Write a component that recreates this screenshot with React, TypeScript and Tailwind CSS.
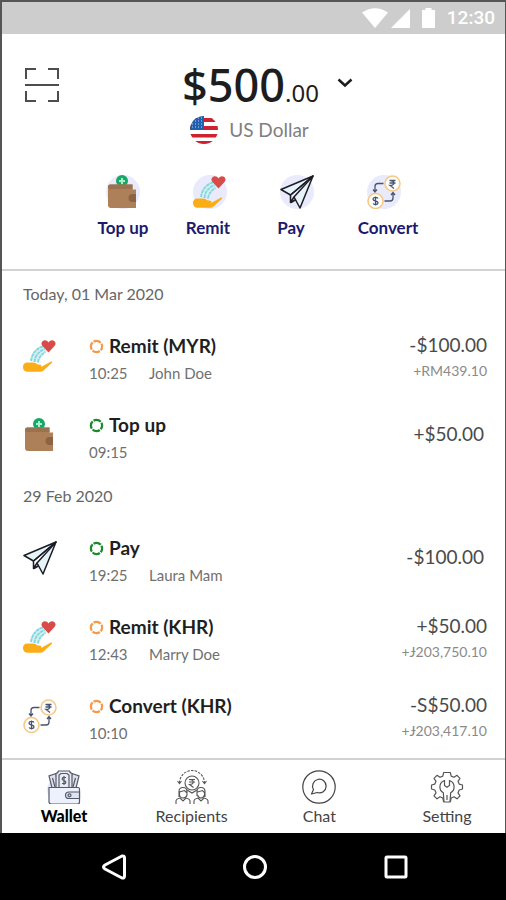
import type React from "react";

type IconProps = { className?: string };

const ScanIcon = ({ className }: IconProps) => (
  <svg className={className} viewBox="0 0 36 36" fill="none" stroke="#4d4d4d" strokeWidth="2">
    <path d="M2 12V2h10M24 2h10v10M34 24v10H24M12 34H2V24M1 18h34" />
  </svg>
);

const FlagIcon = ({ className }: IconProps) => (
  <svg className={className} viewBox="0 0 28 28">
    <rect width="28" height="28" fill="#fff" />
    <path d="M0 2h28v4H0zM0 10h28v4H0zM0 18h28v3.500H0zM0 25h28v3H0z" fill="#cf2230" />
    <rect width="14" height="14" fill="#1f5fae" />
    <path
      d="M8 2h1M11 2h1M5 5h1M8 5h1M11 5h1M2 8h1M5 8h1M8 8h1M11 8h1M2 11h1M5 11h1M8 11h1M11 11h1"
      stroke="#b9d3ef"
      strokeWidth="1"
    />
  </svg>
);

const WalletBrownIcon = ({ className }: IconProps) => (
  <svg className={className} viewBox="0 0 34 34">
    <circle cx="16" cy="6" r="6" fill="#15a866" />
    <path d="M16 3v6M13 6h6" stroke="#a9efcb" strokeWidth="2" />
    <path d="M4 9.500h22.500v5H30v18.500H5a3 3 0 0 1-3-3v-18.500a2 2 0 0 1 2-2z" fill="#ad8059" />
    <path d="M2 12q0-2.500 2.500-2.500h22V14H4q-2 0-2-2z" fill="#9b7250" />
    <path d="M26.500 19H30v8h-3.500a4 4 0 0 1 0-8z" fill="#8d6443" />
  </svg>
);

const RemitIcon = ({ className }: IconProps) => (
  <svg className={className} viewBox="0 0 34 34">
    <path d="M7 22C8 14 13 8 20 6l4 6.500c-4 2-7 6-8 11z" fill="#d3f1f4" />
    <path
      d="M8 22C9 15 13 9.500 20 7.500M11.500 23c.5-6 4-10.500 10-13M15 23.500c.5-4.500 3-8 7.500-10.500"
      fill="none"
      stroke="#84d6dc"
      strokeWidth="1.800"
      strokeDasharray="3.500 .6"
    />
    <path
      d="M25.500 13.500 19.500 7a3.500 3.500 0 0 1 0-4.700c1.800-1.800 4.500-1.200 6 1.200 1.500-2.400 4.200-3 6-1.200a3.500 3.500 0 0 1 0 4.700z"
      fill="#d84b49"
    />
    <path
      d="M0 28q0-4.500 4.500-4.500h6q2.500 0 3.500 1.700l3.500.6q1.800.8.5 2.200l10-5.500q1.500-.3 1 1.200L20 32q-1 .8-2.500.8H5Q0 32.500 0 28z"
      fill="#fbad18"
    />
  </svg>
);

const PlaneIcon = ({ className }: IconProps) => (
  <svg
    className={className}
    viewBox="0 0 34 34"
    fill="none"
    stroke="#1c1c26"
    strokeWidth="1.500"
    strokeLinejoin="round"
  >
    <path d="M33 1 1 14.500l9.500 5.500z" fill="#e6f4fa" />
    <path d="M33 1 14 22l6 11z" fill="#e6f4fa" />
    <path d="M10.500 20 33 1M10.500 20v7.500L14 22M11 27.500l5-3" />
  </svg>
);

const ConvertIcon = ({ className }: IconProps) => (
  <svg className={className} viewBox="0 0 34 34" fill="none">
    <circle cx="25.500" cy="8.500" r="7.500" fill="#fff" stroke="#f8c983" strokeWidth="1.600" />
    <circle cx="8.500" cy="26" r="7.500" fill="#fff" stroke="#f8c983" strokeWidth="1.600" />
    <g stroke="#4a5470" strokeWidth="1.300">
      <path d="M22.500 5.500h6M22.500 8h6M23 5.500c5 0 5 5 0 5l4 3" />
      <path d="M11 23.500c-1-1.500-5-1.500-5 .8 0 2.200 5 1.200 5 3.400 0 2.300-4 2.300-5 .8M8.500 21.500v9" />
      <path d="M16.500 8.500H11a3 3 0 0 0-3 3v5.500M6 14.500l2 2.500 2-2.500" />
      <path d="M17.500 26H23a3 3 0 0 0 3-3v-5.500M24 20l2-2.500 2 2.500" />
    </g>
  </svg>
);

const StatusRing = ({ color }: { color: string }) => (
  <svg className="w-[15px] h-[15px] mr-[5px] shrink-0" viewBox="0 0 16 16" fill="none">
    <circle
      cx="8"
      cy="8"
      r="6"
      stroke={color}
      strokeWidth="2.400"
      strokeDasharray="8.300 1.125"
      strokeDashoffset="4"
    />
  </svg>
);

const MoneyWalletIcon = ({ className }: IconProps) => (
  <svg className={className} viewBox="0 0 34 34" fill="none" stroke="#555a6b" strokeWidth="1.200">
    <circle cx="12" cy="20" r="12" fill="#e6e9fa" stroke="none" />
    <path d="M5 18 2 6l7-2.500L11 18M29 18l3-12-7-2.500L23 18" fill="#dfe2ec" />
    <path d="M9 18V3.500q2-.5 2.500-2.500h11q.5 2 2.500 2.500V18z" fill="#e9ebf3" />
    <path d="M12 17V5l2-1.500h6L22 5v12M5.500 8l2.500 9M28.500 8 26 17" />
    <path d="M19 7.500h-3q-1.500 1.500 0 2.500l2 1q1.500 1.500 0 2.500h-3M17 6v9" />
    <path d="M2 17.500h29a1.500 1.500 0 0 1 1.500 1.500v13a2 2 0 0 1-2 2h-26a2.500 2.500 0 0 1-2.500-2.500z" fill="#edf0fd" />
    <path d="M32.500 22H22q-3.500 0-3.500 3.300t3.500 3.200h10.500z" fill="#dfe3f5" />
    <circle cx="22.500" cy="25.300" r="1.500" />
  </svg>
);

const RecipientsIcon = ({ className }: IconProps) => (
  <svg className={className} viewBox="0 0 34 34" fill="none" stroke="#555" strokeWidth="1.100">
    <path d="M4.500 13a12.500 12.500 0 0 1 25 0" strokeDasharray="2.500 1.200" />
    <path d="m2.500 11 2 2.500 2-2.500M27.500 11l2 2.500 2-2.500" />
    <circle cx="17" cy="13" r="7" />
    <path d="M14 9.500h6M14 12h6M14.500 9.500c5 0 5 5 0 5l4 3" />
    <path d="M4 27v-5.500q0-4 4-4t4 4V25q-1 3-4 3t-3.500-3v-3l5-1.500 2 2" />
    <path d="M22 26v-4.500q0-4 4-4t4 4V27M22.500 22l5-1.500 2 2V25q-1 3-3.500 3t-3.500-3" />
    <path d="M1 34v-3q0-2 4-3l3 3 3-3q4 1 4 3v3M19 34v-3q0-2 4-3l3 3 3-3q4 1 4 3v3M12 20l5 3 5-3" />
  </svg>
);

const ChatIcon = ({ className }: IconProps) => (
  <svg className={className} viewBox="0 0 34 34" fill="none" stroke="#444" strokeWidth="1.200">
    <circle cx="17" cy="17" r="16.200" />
    <path d="M11.500 19.500a6.800 6.800 0 1 1 3.700 3L9.500 24z" strokeLinejoin="round" />
  </svg>
);

const SettingIcon = ({ className }: IconProps) => (
  <svg className={className} viewBox="0 0 34 34" fill="none" stroke="#555" strokeWidth="1.200">
    <path
      d="M14 31.500h-.5L12.800 28 10 26.800l-3 2-3-3 2-3L4.800 20 1.500 19v-4l3.300-.9L6 11.300l-2-3 3-3 3 2 2.800-1.200L13.700 2.500h6.600l.9 3.600L24 7.300l3-2 3 3-2 3 1.200 2.800 3.300.9v4l-3.300 1-1.200 2.800 2 3-3 3-3-2-2.800 1.200-.7 3.500H20"
      strokeLinejoin="round"
    />
    <path d="M14.500 10.500v5l2.500 1.700 2.500-1.700v-5a6.700 6.700 0 0 1 1.200 12.200L20 32h-6l-.7-9.300a6.700 6.700 0 0 1 1.200-12.200z" />
    <path d="M17 25v5" />
  </svg>
);

const actions = [
  { Icon: WalletBrownIcon, label: "Top up", labelClass: "" },
  { Icon: RemitIcon, label: "Remit", labelClass: "pr-1" },
  { Icon: PlaneIcon, label: "Pay", labelClass: "pr-3" },
  { Icon: ConvertIcon, label: "Convert", labelClass: "pl-2" },
];

type Transaction = {
  Icon: React.ComponentType<IconProps>;
  title: string;
  time: string;
  name?: string;
  amount: string;
  converted?: string;
  ring: string;
};

const ORANGE = "#f59a4c";
const GREEN = "#1c8a2c";

const today: Transaction[] = [
  { Icon: RemitIcon, title: "Remit (MYR)", time: "10:25", name: "John Doe", amount: "-$100.00", converted: "+RM439.10", ring: ORANGE },
  { Icon: WalletBrownIcon, title: "Top up", time: "09:15", amount: "+$50.00", ring: GREEN },
];

const earlier: Transaction[] = [
  { Icon: PlaneIcon, title: "Pay", time: "19:25", name: "Laura Mam", amount: "-$100.00", ring: GREEN },
  { Icon: RemitIcon, title: "Remit (KHR)", time: "12:43", name: "Marry Doe", amount: "+$50.00", converted: "+Ɉ203,750.10", ring: ORANGE },
  { Icon: ConvertIcon, title: "Convert (KHR)", time: "10:10", amount: "-S$50.00", converted: "+Ɉ203,417.10", ring: ORANGE },
];

const tabs = [
  { Icon: MoneyWalletIcon, label: "Wallet", active: true },
  { Icon: RecipientsIcon, label: "Recipients" },
  { Icon: ChatIcon, label: "Chat" },
  { Icon: SettingIcon, label: "Setting" },
];

const TransactionRow = ({ Icon, title, time, name, amount, converted, ring }: Transaction) => (
  <li className="flex">
    <Icon className="w-[34px] h-[34px] mt-[7px] mr-8 shrink-0" />
    <div className="flex-1">
      <h3 className="flex items-center text-[19px] leading-7 font-bold text-[#1f1f1f]">
        <StatusRing color={ring} />
        {title}
      </h3>
      <p className="flex text-[15px] leading-[26px] text-[#707070]">
        <span className="w-[60px]">{time}</span>
        {name}
      </p>
    </div>
    <div className={converted ? "text-right" : "text-right self-center pr-[3px] pb-2"}>
      <p className="text-[19px] leading-[26px] text-[#4a4a4a]">{amount}</p>
      {converted && <p className="text-[14px] leading-[26px] text-[#8a8a8a]">{converted}</p>}
    </div>
  </li>
);

const DayLabel = ({ children }: { children: React.ReactNode }) => (
  <h2 className="text-[16px] leading-5 text-[#666]">{children}</h2>
);

const StatusBar = () => (
  <div className="flex h-8 items-center justify-end bg-[#cdcdcd] pr-[10px] text-white">
    <svg className="w-[26px] h-[20px]" viewBox="0 0 26 20" fill="currentColor">
      <path d="M13 20 0 4.500Q13-4 26 4.500z" />
    </svg>
    <svg className="w-[19px] h-[19px] ml-[3px]" viewBox="0 0 19 19" fill="currentColor">
      <path d="M19 0v19H0z" />
    </svg>
    <svg className="w-[13px] h-[20px] ml-3" viewBox="0 0 13 20" fill="currentColor">
      <path d="M3.500 0h6v2H13v18H0V2h3.500z" />
    </svg>
    <span className="ml-3 font-[Roboto,sans-serif] text-[19px] leading-6 font-medium">12:30</span>
  </div>
);

export default function App() {
  return (
    <div className="flex min-h-screen flex-col bg-black font-[Lato,'Noto_Sans',sans-serif]">
      <div className="flex flex-1 flex-col border-t-2 border-r border-l-2 border-[#555] bg-white">
        <StatusBar />

        <header className="border-b-2 border-[#d2d2d2] pt-[27px] pb-[29px]">
          <div className="flex items-start px-[22px]">
            <button type="button" aria-label="Scan" className="mt-[6px]">
              <ScanIcon className="w-9 h-9" />
            </button>
            <div className="flex-1 pr-[8px]">
              <button type="button" className="mx-auto flex h-12 items-center font-['Noto_Sans',sans-serif] text-[#1d1d1d]">
                <span className="text-[45px] leading-[48px] font-medium">
                  $500<span className="text-[24px] leading-none font-normal">.00</span>
                </span>
                <svg className="ml-[18px] mb-1 w-4 h-3" viewBox="0 0 16 12" fill="none" stroke="currentColor" strokeWidth="2.500">
                  <path d="m1.500 2.500 6.500 6 6.500-6" />
                </svg>
              </button>
              <div className="mt-[7px] flex h-7 items-center justify-center gap-[11px] pr-9 text-[19px] text-[#808080]">
                <FlagIcon className="w-7 h-7 rounded-full" />
                US Dollar
              </div>
            </div>
          </div>

          <div className="mt-[31px] flex justify-center">
            {actions.map(({ Icon, label, labelClass }) => (
              <button key={label} type="button" className="flex w-[87px] flex-col items-center">
                <span className="flex h-[34px] w-[34px] items-center justify-center rounded-full bg-[#e9eafb]">
                  <Icon className="w-[34px] h-[34px]" />
                </span>
                <span className={`mt-[7px] text-[17px] leading-6 font-bold text-[#1c1a6e] ${labelClass}`}>
                  {label}
                </span>
              </button>
            ))}
          </div>
        </header>

        <main className="flex-1 pt-[13px] pr-[18px] pb-3 pl-[21px]">
          <DayLabel>Today, 01 Mar 2020</DayLabel>
          <ul className="mt-7 mb-[21px] flex flex-col gap-[25px]">
            {today.map((item) => (
              <TransactionRow key={item.time} {...item} />
            ))}
          </ul>
          <DayLabel>29 Feb 2020</DayLabel>
          <ul className="mt-7 flex flex-col gap-[25px]">
            {earlier.map((item) => (
              <TransactionRow key={item.time} {...item} />
            ))}
          </ul>
        </main>

        <nav className="flex justify-between border-t-2 border-[#d2d2d2] pt-[10px] pr-[2px] pb-[5px] pl-[6px]">
          {tabs.map(({ Icon, label, active }) => (
            <a key={label} href={`#${label.toLowerCase()}`} className="flex w-28 flex-col items-center">
              <Icon className="w-[34px] h-[34px]" />
              <span className={active ? "text-[16px] leading-6 font-black text-black" : "text-[16px] leading-6 text-[#444]"}>
                {label}
              </span>
            </a>
          ))}
        </nav>
      </div>

      <div className="flex h-[67px] items-center justify-center gap-[115px] pl-[3px] text-white">
        <button type="button" aria-label="Back">
          <svg className="w-[26px] h-[26px]" viewBox="0 0 26 26" fill="none" stroke="currentColor" strokeWidth="3" strokeLinejoin="round">
            <path d="M2.500 13 Q2.500 12 4 11L21 2Q23.500 1.500 23.500 4V22Q23.500 24.500 21 24L4 15Q2.500 14 2.500 13z" />
          </svg>
        </button>
        <button type="button" aria-label="Home">
          <svg className="w-[26px] h-[26px]" viewBox="0 0 26 26" fill="none" stroke="currentColor" strokeWidth="3">
            <circle cx="13" cy="13" r="10.500" />
          </svg>
        </button>
        <button type="button" aria-label="Overview">
          <svg className="w-[26px] h-[26px]" viewBox="0 0 26 26" fill="none" stroke="currentColor" strokeWidth="3">
            <rect x="3" y="3" width="20" height="20" rx="1" />
          </svg>
        </button>
      </div>
    </div>
  );
}
